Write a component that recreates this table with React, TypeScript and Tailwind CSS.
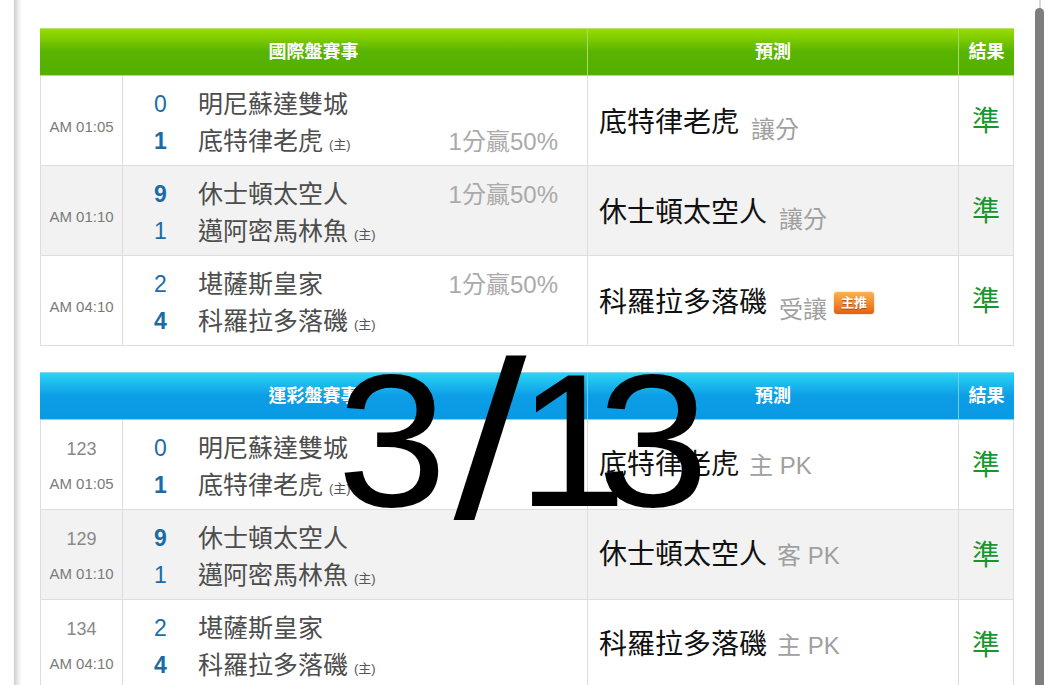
import React from "react";

type Team = { s: string; n: string; w?: boolean; home?: boolean };
type Row = {
  id?: string;
  time: string;
  a: Team;
  b: Team;
  odds?: string;
  oddsLine?: 1 | 2;
  pick: string;
  note: string;
  badge?: boolean;
};

const intl: Row[] = [
  { time: "AM 01:05", a: { s: "0", n: "明尼蘇達雙城" }, b: { s: "1", n: "底特律老虎", w: true, home: true }, odds: "1分贏50%", oddsLine: 2, pick: "底特律老虎", note: "讓分" },
  { time: "AM 01:10", a: { s: "9", n: "休士頓太空人", w: true }, b: { s: "1", n: "邁阿密馬林魚", home: true }, odds: "1分贏50%", oddsLine: 1, pick: "休士頓太空人", note: "讓分" },
  { time: "AM 04:10", a: { s: "2", n: "堪薩斯皇家" }, b: { s: "4", n: "科羅拉多落磯", w: true, home: true }, odds: "1分贏50%", oddsLine: 1, pick: "科羅拉多落磯", note: "受讓", badge: true },
];

const lottery: Row[] = [
  { id: "123", time: "AM 01:05", a: { s: "0", n: "明尼蘇達雙城" }, b: { s: "1", n: "底特律老虎", w: true, home: true }, pick: "底特律老虎", note: "主 PK" },
  { id: "129", time: "AM 01:10", a: { s: "9", n: "休士頓太空人", w: true }, b: { s: "1", n: "邁阿密馬林魚", home: true }, pick: "休士頓太空人", note: "客 PK" },
  { id: "134", time: "AM 04:10", a: { s: "2", n: "堪薩斯皇家" }, b: { s: "4", n: "科羅拉多落磯", w: true, home: true }, pick: "科羅拉多落磯", note: "主 PK" },
];

function TeamLine({ t, odds }: { t: Team; odds?: string }) {
  return (
    <div className="flex h-[37px] items-center">
      <span className={`w-[75px] text-center text-[23px] text-[#1b6ca6] ${t.w ? "font-bold" : "font-normal"}`}>{t.s}</span>
      <span className="text-[25px] text-[#4d4d4d]">{t.n}</span>
      {t.home && <span className="ml-[6px] mt-[6px] text-[13px] text-[#555]">(主)</span>}
      {odds && <span className="ml-auto pr-[29px] text-[24px] text-[#aaaaaa]">{odds}</span>}
    </div>
  );
}

function Table({ title, rows, kind }: { title: string; rows: Row[]; kind: "green" | "blue" }) {
  const head =
    kind === "green"
      ? "bg-gradient-to-b from-[#98dc00] via-[#58b400] to-[#54b000] border-[#b4e46e]"
      : "bg-gradient-to-b from-[#2bd4f3] via-[#0c9de6] to-[#0a9ae5] border-[#7fd8f6]";
  const sep = kind === "green" ? "border-[#a6dc64]" : "border-[#72cdf2]";
  return (
    <div className="w-[974px]">
      <div className={`grid h-[48px] grid-cols-[548px_371px_1fr] border-y text-[18px] font-bold text-white ${head}`}>
        <div className={`flex items-center justify-center border-r ${sep}`}>{title}</div>
        <div className={`flex items-center justify-center border-r ${sep}`}>預測</div>
        <div className="flex items-center justify-center">結果</div>
      </div>
      <div className="border-x border-[#dddddd]">
        {rows.map((r, i) => (
          <div
            key={i}
            className={`grid h-[90px] grid-cols-[82px_465px_371px_1fr] border-b border-[#dddddd] ${i % 2 === 1 ? "bg-[#f2f2f2]" : "bg-white"}`}
          >
            <div className="flex flex-col items-center justify-center border-r border-[#dddddd] text-[#7a7a7a]">
              {r.id ? (
                <>
                  <span className="mt-[4px] text-[18px] leading-[20px] text-[#888]">{r.id}</span>
                  <span className="mt-[15px] text-[15px] leading-[20px]">{r.time}</span>
                </>
              ) : (
                <span className="mt-[13px] text-[15px]">{r.time}</span>
              )}
            </div>
            <div className="flex flex-col justify-center border-r border-[#dddddd] pt-[5px]">
              <TeamLine t={r.a} odds={r.oddsLine === 1 ? r.odds : undefined} />
              <TeamLine t={r.b} odds={r.oddsLine === 2 ? r.odds : undefined} />
            </div>
            <div className={`flex items-center border-r border-[#dddddd] pl-[11px] ${r.id ? "pt-[1px]" : "pt-[4px]"}`}>
              {r.id ? (
                <div className="flex items-baseline">
                  <span className="text-[28px] text-[#111]">{r.pick}</span>
                  <span className="ml-[10px] text-[24px] text-[#a0a0a0]">{r.note}</span>
                </div>
              ) : (
                <div className="flex items-center">
                  <span className="text-[28px] text-[#111]">{r.pick}</span>
                  <span className="ml-[12px] translate-y-[7px] text-[24px] text-[#a0a0a0]">{r.note}</span>
                  {r.badge && (
                    <span className="ml-[7px] flex h-[22px] w-[40px] items-center justify-center rounded-[3px] bg-gradient-to-b from-[#fbb24e] to-[#e85e08] text-[13px] font-bold text-white [text-shadow:0_1px_1px_rgba(120,40,0,0.6)] shadow-[0_0_2px_rgba(240,140,40,0.6)]">
                      主推
                    </span>
                  )}
                </div>
              )}
            </div>
            <div className="flex items-center justify-center pt-[3px] text-[28px] text-[#18962e]">準</div>
          </div>
        ))}
      </div>
    </div>
  );
}

export default function App() {
  return (
    <div className="relative flex h-[685px] w-[1053px] overflow-hidden bg-white font-['Liberation_Sans','Noto_Sans_CJK_TC',sans-serif]">
      <div className="w-[14px] shrink-0" />
      <div className="w-[8px] shrink-0 bg-gradient-to-r from-[#cdcdcd] via-[#ececec] to-white" />
      <div className="flex flex-col gap-[26px] pl-[18px] pt-[28px]">
        <Table title="國際盤賽事" rows={intl} kind="green" />
        <Table title="運彩盤賽事" rows={lottery} kind="blue" />
      </div>
      <div className="absolute left-[1039px] top-0 h-[10px] w-[2px] bg-[#d8d8d8]" />
      <div className="absolute bottom-0 left-[1035px] top-[8px] w-[9px] rounded-t-full bg-[#7e7e7e]" />
      <div className="pointer-events-none absolute left-[342px] top-[345px] flex text-[190px] leading-none text-black">
        <span className="flex w-[100px] justify-center scale-x-[1.04]">3</span>
        <span className="flex w-[96px] justify-center scale-x-[1.38] scale-y-[1.18]">/</span>
        <span className="flex w-[68px] justify-center scale-x-[1.04]">1</span>
        <span className="flex w-[94px] justify-center scale-x-[1.06]">3</span>
      </div>
    </div>
  );
}
